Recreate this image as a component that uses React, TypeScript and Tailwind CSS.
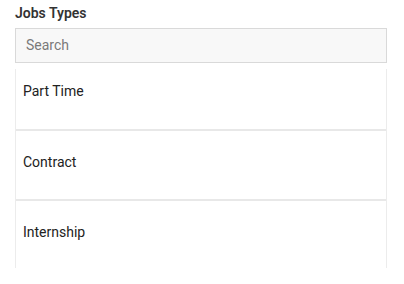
export default function App() {
  const items = ["Part Time", "Contract", "Internship"];
  return (
    <div className="w-[404px] h-[284px] bg-white overflow-hidden" style={{ fontFamily: "Roboto, 'Liberation Sans', sans-serif" }}>
      <div className="pl-[15px] pr-[17px] pt-[4px]">
        <div className="text-[14px] leading-[18px] font-semibold text-[#333333]">Jobs Types</div>
        <div className="mt-[6px] h-[35px] border border-[#d9d9d9] bg-[#f8f8f8] flex items-center px-[10px]">
          <span className="text-[14px] text-[#7a7a7a]">Search</span>
        </div>
        <div className="mt-[6px] h-[199px] border-x border-[#ececec] overflow-hidden">
          {items.map((t, i) => (
            <div
              key={t}
              className={`${i === 0 ? "h-[62px] pt-[12px]" : "h-[70px] pt-[21px]"} border-b-2 border-[#e8e8e8] px-[7px] text-[14px] leading-[20px] text-[#222222]`}
            >
              {t}
            </div>
          ))}
        </div>
      </div>
    </div>
  );
}
